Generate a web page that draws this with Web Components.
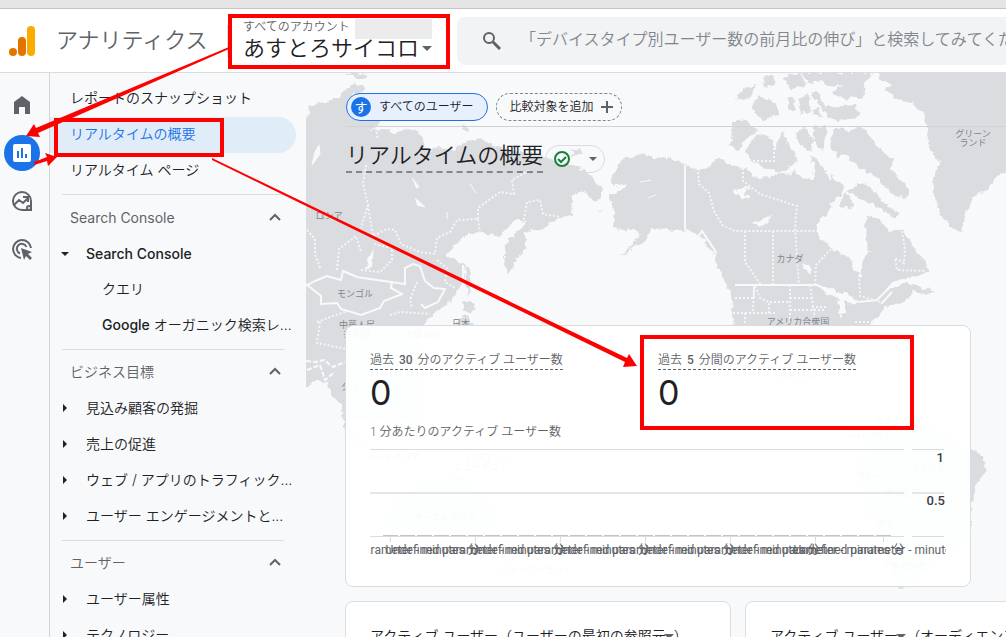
<!DOCTYPE html>
<html lang="ja">
<head>
<meta charset="utf-8">
<meta name="viewport" content="width=device-width, initial-scale=1">
<title>アナリティクス | リアルタイムの概要</title>
<style>
html,body{margin:0;height:100%}
body{overflow:hidden;background:#f8f9fb;color:#202124;font-family:Inter,"Noto Sans CJK JP",sans-serif;font-size:14px}
</style>
</head>
<body>
<ga-app></ga-app>
<script>
const define = (name, html, setup) => customElements.define(name, class extends HTMLElement {
  constructor() {
    super();
    const t = document.createElement('template');
    t.innerHTML = html;
    this.attachShadow({mode: 'open'}).append(t.content.cloneNode(true));
  }
  connectedCallback() { if (setup) setup(this, this.shadowRoot); }
});

define('ga-header', `
<style>
:host{display:block;background:#fff;border-bottom:1px solid #dadce0}
.strip{height:8px;background:#e5e5e5;border-bottom:1px solid #c4c4c4}
header{height:63px;display:flex;align-items:center}
.logo{width:28px;height:32px;margin-left:8px;flex:none}
.brand{width:172px;margin-left:20px;font-size:22px;line-height:30px;padding-bottom:2px;color:#5f6368;white-space:nowrap;box-sizing:border-box;border-right:1px solid #dadce0;flex:none;font-weight:350}
.acct{margin-left:15px;width:214px;flex:none;border:0;padding:0 0 2px;background:none;text-align:left;font:inherit;color:inherit;display:flex;flex-direction:column}
.top{display:flex;font-size:12px;line-height:16px;color:#5f6368;height:16px;font-weight:350}
.mask{width:77px;height:20px;background:#ececec;margin-left:5px}
.name{font-size:22px;line-height:26px;display:flex;align-items:center;gap:2px;font-weight:350}
.search{flex:1;min-width:0;height:48px;background:#f1f3f4;border-radius:8px 0 0 8px;display:flex;align-items:center;overflow:hidden}
.search svg{margin-left:22px;flex:none}
input{flex:1;min-width:0;margin-left:17px;border:0;padding:0 0 4px;background:none;font:350 16px/24px Inter,"Noto Sans CJK JP",sans-serif;outline:0}
input::placeholder{color:#80868b;opacity:1}
</style>
<div class="strip"></div>
<header>
<svg class="logo" viewBox="0 0 28 32"><rect x="19" y="1" width="8" height="30" rx="4" fill="#f9ab00"/><rect x="10" y="12" width="8" height="19" rx="4" fill="#e37400"/><circle cx="5" cy="27" r="4" fill="#e37400"/></svg>
<div class="brand">アナリティクス</div>
<button class="acct"><span class="top">すべてのアカウント<span class="mask"></span></span><span class="name">あすとろサイコロ<svg width="12" height="8" viewBox="0 0 12 8"><path d="M1 2h10L6 7z" fill="#5f6368"/></svg></span></button>
<div class="search"><svg width="24" height="24" viewBox="0 0 24 24"><circle cx="10" cy="9" r="5" fill="none" stroke="#5f6368" stroke-width="2"/><path d="M14 13l7 7" stroke="#5f6368" stroke-width="3"/></svg><input aria-label="検索" placeholder="「デバイスタイプ別ユーザー数の前月比の伸び」と検索してみてください"></div>
</header>`);

define('ga-rail', `
<style>
:host{display:block;width:49px;flex:none;border-right:1px solid #d2d4d8}
nav{display:flex;flex-direction:column;align-items:center;gap:12px;padding:14px 5px 0 0}
a{width:36px;height:36px;border-radius:50%;display:grid;place-items:center;color:#5f6368}
a.on{background:#1a73e8;color:#fff}
</style>
<nav aria-label="メイン">
<a href="#home" aria-label="ホーム"><svg width="24" height="24" viewBox="0 0 24 24"><path d="M4 21V9l8-6 8 6v12h-5v-7H9v7z" fill="currentColor"/></svg></a>
<a href="#reports" class="on" aria-label="レポート"><svg width="24" height="24" viewBox="0 0 24 24"><rect x="3" y="3" width="18" height="18" rx="2" fill="#fff"/><path d="M8 10v7M12 7v10M16 13v4" stroke="#1a73e8" stroke-width="2"/></svg></a>
<a href="#explore" aria-label="探索"><svg width="24" height="24" viewBox="0 0 24 24"><path d="M12 3a9 9 0 1 0 0 18h9v-9a9 9 0 0 0-9-9z" fill="none" stroke="currentColor" stroke-width="2"/><path d="M4 16l5-5 4 3 5-5M13 8h5v5" fill="none" stroke="currentColor" stroke-width="2"/><circle cx="19" cy="19" r="3" fill="currentColor"/><circle cx="19" cy="19" r="1" fill="#f8f9fb"/></svg></a>
<a href="#ads" aria-label="広告"><svg width="24" height="24" viewBox="0 0 24 24"><path d="M11 21a9 9 0 1 1 10-10M10 16.500a5 5 0 1 1 6.500-6.500" fill="none" stroke="currentColor" stroke-width="2"/><path d="M11 11l11 4-4 2 4 4-2 2-4-4-2 4z" fill="currentColor"/></svg></a>
</nav>`);

define('ga-item', `
<style>
:host{display:block}
a{display:flex;align-items:center;height:36px;box-sizing:border-box;color:#202124;text-decoration:none;font-size:14px;line-height:20px;white-space:nowrap;padding:0 0 2px 20px;font-weight:350}
:host([level="1"]) a{padding-left:12px}
:host([level="2"]) a{padding-left:52px}
:host([latin]) a{font-weight:500;padding-bottom:0}
:host([on]) a{background:#e1ecf9;color:#1a73e8;border-radius:0 18px 18px 0;margin-right:10px}
svg{display:none;flex:none;margin-right:18px}
:host([level="1"]) svg{display:block}
:host([open]) svg{transform:rotate(90deg)}
</style>
<a href="#report"><svg width="6" height="8" viewBox="0 0 6 8"><path d="M1 0l4 4-4 4z" fill="#202124"/></svg><slot></slot></a>`);

define('ga-section', `
<style>
:host{display:block}
hr{border:0;border-top:1px solid #dadce0;margin:5px 22px 5px 12px}
button{width:100%;height:36px;border:0;background:none;padding:0 24px 2px 20px;display:flex;align-items:center;justify-content:space-between;font:inherit;font-size:14px;line-height:20px;color:#5f6368;font-weight:350}
:host([latin]) button{font-weight:400;padding-bottom:0}
</style>
<hr><button aria-expanded="true"><span></span><svg width="14" height="10" viewBox="0 0 14 10"><path d="M2 7l5-5 5 5" fill="none" stroke="#5f6368" stroke-width="2"/></svg></button><slot></slot>`,
(el, root) => root.querySelector('span').textContent = el.getAttribute('heading'));

define('ga-sidebar', `
<style>:host{display:block;width:256px;flex:none;padding-top:8px;box-sizing:border-box}</style>
<nav aria-label="レポート">
<ga-item>レポートのスナップショット</ga-item>
<ga-item on>リアルタイムの概要</ga-item>
<ga-item>リアルタイム ページ</ga-item>
<ga-section heading="Search Console" latin>
<ga-item level="1" open latin>Search Console</ga-item>
<ga-item level="2">クエリ</ga-item>
<ga-item level="2"><span style="font-weight:500">Google</span>&nbsp;オーガニック検索レ...</ga-item>
</ga-section>
<ga-section heading="ビジネス目標">
<ga-item level="1">見込み顧客の発掘</ga-item>
<ga-item level="1">売上の促進</ga-item>
<ga-item level="1">ウェブ / アプリのトラフィック...</ga-item>
<ga-item level="1">ユーザー エンゲージメントと...</ga-item>
</ga-section>
<ga-section heading="ユーザー">
<ga-item level="1">ユーザー属性</ga-item>
<ga-item level="1">テクノロジー</ga-item>
</ga-section>
</nav>`);

define('ga-map', `
<style>
:host{display:block;position:absolute;inset:0;overflow:hidden}
svg{display:block}
.land{fill:#dadce0}
.w{fill:#f8f9fb}
.b{fill:none;stroke:#f8f9fb;stroke-width:2}
.d{fill:none;stroke:#f5f6f8;stroke-width:2;stroke-dasharray:2 2}
text{font:9px Roboto,"Noto Sans CJK JP",sans-serif;fill:#80868b;text-anchor:middle}
</style>
<svg width="700" height="564" viewBox="306 73 700 564" aria-hidden="true">
<defs><filter id="coast" x="0" y="0" width="100%" height="100%"><feTurbulence type="fractalNoise" baseFrequency=".16" numOctaves="3" seed="4"/><feDisplacementMap in="SourceGraphic" scale="7" xChannelSelector="R" yChannelSelector="G"/></filter></defs>
<g filter="url(#coast)">
<g class="land">
<path d="M296 120L308 115 309 107 320 103 330 101 346 90 354 84 363 85 364 91 352 95 350 101 358 105 373 102 379 107 372 114 381 119 377 128 367 130 385 129 395 133 409 128 420 132 423 143 428 152 440 147 455 150 466 141 480 139 496 147 520 152 542 156 560 164 577 166 590 175 604 190 600 198 595 203 586 192 577 192 572 200 571 215 553 220 543 229 533 230 525 232 526 247 518 258 509 275 505 262 505 246 515 233 528 222 516 220 505 230 500 236 483 233 466 234 456 244 447 257 455 260 464 264 464 280 457 292 447 305 437 310 426 322 420 330H420V420H346L341 405 334 399 327 384 317 379 308 387H296z"/>
<path d="M465 265L470 267 472 284 468 297 466 280z"/><path d="M465 301L476 307 471 314 462 310zM458 319L468 316 474 327H455z"/>
<path d="M345 73L357 73 368 76 357 79zM462 125L468 127 469 132 462 130zM571 151L580 149 582 154 573 156zM598 209L604 211 600 213z"/>
<path d="M610 183L613 173 622 160 635 157 642 152 652 157 666 158 684 163 698 171 708 168 716 160 722 160 733 165 748 170 757 178 772 177 778 172 790 175 795 170 800 178 812 180 815 168 809 155 821 163 830 182 832 174 837 183 845 186 839 196 832 203 826 215 817 224 817 234 832 249 850 258 853 270 861 276 863 260 868 250 866 235 864 222 869 216 880 220 889 231 902 229 910 241 916 252 926 262 927 272 916 277 897 280 886 291 906 283 917 285 935 292 926 294 914 292 901 304 888 305 880 315 870 325V345H735L732 296 726 284 717 266 711 251 700 236 688 231 665 229 652 228 644 242 631 249 618 259 630 247 641 234 634 229 620 231 613 228 615 212 608 196 620 191 628 185 614 186z"/>
<path d="M730 146L733 122 745 120 758 130 744 140 738 152z"/>
<path d="M745 152L757 134 771 138 775 151 782 132 790 148 798 160 786 171 767 170 752 160z"/>
<path d="M794 135L804 126 813 139 811 152 801 146zM814 127L828 126 825 139 822 151 814 140z"/>
<path d="M830 146L833 130 842 127 848 133 856 127 866 129 870 139 881 149 893 160 890 168 901 181 910 190 907 199 893 195 879 180 864 170 850 160 845 153 838 158z"/>
<path d="M736 98L744 88 755 86 751 97 744 101zM752 110L758 96 768 99 778 106 779 115 762 120zM788 100L793 96 795 109 789 111zM798 98L808 94 810 112 802 114zM811 94L818 91 826 107 856 105 860 117 839 121 829 117zM762 79L772 75 776 83 766 87zM782 77L800 73 806 84 791 90zM800 73H874L864 84 865 97 846 99 831 92 843 84 828 86 821 80 812 84zM812 110L819 108 821 118 814 115z"/>
<path d="M875 65H1020V167L997 176 987 190 975 196 966 212 962 231 951 228 941 216 934 195 933 178 940 163 930 151 928 129 923 112 911 103 896 99 885 89 892 84 881 80z"/>
<path d="M842 196L846 192 854 204 850 209 840 207zM848 193L858 184 868 185 883 202 899 213 898 219 886 212 873 204 866 202z"/>
<path d="M965 445L978 453 986 461 984 474 976 484 974 500 966 508zM875 424L940 430 970 455 970 535 900 590 870 520 855 470zM395 500L430 480 465 476 495 510 490 535 440 533 385 528zM340 407L350 424 365 442 374 452 361 448 347 435z"/>
</g>
<g class="w"><path d="M731 191L742 188 751 187 743 193 750 197 742 199zM752 222L761 221 774 213 767 223 760 226zM820 290L828 286 836 293 846 293 857 301 851 305 846 300 846 312 840 316 838 298 828 294zM804 263L810 267 811 275 805 270zM932 161L940 159 938 168zM363 270L370 257 373 247 374 258 368 270z"/></g>
</g>
<g class="b"><path d="M306 286L315 281 327 276 341 280 343 271 357 277 370 279 391 282 405 284 405 268 413 264 420 266 425 281 434 288 445 289 438 302 425 308 421 304M306 284L321 296 321 304 337 303 341 309 361 315 380 308 384 301 402 294 391 288 392 281"/>
<path d="M306 361L316 362 324 360 333 367 345 362M307 370L320 365 325 380 335 372" stroke-dasharray="5 2"/>
<path d="M685 166V229L692 233 697 238 702 231 716 252 713 261M735 285H817L826 289M858 302L877 300 886 291M881 304L892 292M463 265V294L466 296M886 291L893 283 916 279"/></g>
<path d="M312 165L315 152 319 145 320 154zM412 178L419 187 416 188M415 198L425 207 417 205M447 212V219M470 184L476 193M640 182L651 180M648 198L656 195" fill="#f8f9fb" stroke="#f8f9fb"/>
<g class="d"><path d="M376 128L378 140M366 165L363 183 368 205 361 228M368 205L373 236 387 229 395 230 401 244 420 252 435 254 437 238 450 232 457 220 478 219 480 233M478 219L478 208 500 192 514 194 512 180 530 170M524 220L527 202 540 200 543 214 560 217M307 230L315 239 315 254 321 270M337 270L339 249 356 236 361 252M361 270L380 272 392 260 392 248 374 244M437 260L447 268 445 282 455 288M417 282L410 300 412 308M317 322L330 317 345 312M320 322L317 343 346 349M390 315L400 312 430 314"/><path d="M698 172L699 184 709 193 714 211 722 225 735 231H817M743 168L743 181 760 194 797 206 795 228 799 285M745 231V262L761 285M773 231V285M831 249L816 265 815 285M859 275L860 296 880 302M902 231L905 250 904 263 895 258 897 270 926 271M735 298H754V285L753 313M755 286L760 298 769 302V315M790 285V325M770 302H790M790 298H812M790 310H825M810 285L815 320M733 313H775M812 307H826M774 132V161H752M745 313V325M855 322H873"/></g>
<g><text x="329" y="219">ロシア</text><text x="355" y="297">モンゴル</text><text x="357" y="328">中華人民</text><text x="357" y="337">共和国</text><text x="461" y="327">日本</text><text x="423" y="337">大韓民国</text><text x="350" y="390">タイ</text><text x="790" y="262">カナダ</text><text x="798" y="325">アメリカ合衆国</text><text x="973" y="137">グリーン</text><text x="973" y="146">ランド</text><text x="795" y="378">メキシコ</text><text x="393" y="460">インドネシア</text><text x="480" y="461">パプア</text><text x="481" y="470">ニューギニア</text><text x="445" y="521">オーストラリア</text><text x="536" y="573">ニュージーランド</text><text x="897" y="425">ベネズエラ</text><text x="870" y="437">コロンビア</text><text x="928" y="472">ブラジル</text><text x="869" y="479">ペルー</text><text x="902" y="496">ボリビア</text><text x="886" y="527">チリ</text><text x="909" y="569">アルゼンチン</text></g>
</svg>`);

define('ga-card', `
<style>:host{display:block;box-sizing:border-box;background:rgba(255,255,255,.95);border:1px solid #dadce0;border-radius:8px;padding:24px}</style><slot></slot>`);

define('ga-metric', `
<style>
:host{display:block}
.l{display:inline-block;font:350 12px/18px Roboto,"Noto Sans CJK JP",sans-serif;color:#5f6368;border-bottom:1px dashed #5f6368;white-space:nowrap}
::slotted(b){font-weight:500;margin:0 2px}
.v{font-size:34px;line-height:46px;color:#202124}
</style>
<div><span class="l"><slot></slot></span></div><div class="v"></div>`,
(el, root) => root.querySelector('.v').textContent = el.getAttribute('value'));

define('ga-chart', `
<style>
:host{display:block}
svg{display:block;width:100%}
.g{stroke:#dadce0}
.x{font:12px Roboto,"Noto Sans CJK JP",sans-serif;fill:#5f6368;text-anchor:middle}
.y{font:500 13px Roboto,sans-serif;fill:#3c4043;text-anchor:end}
</style>
<svg viewBox="0 0 576 116" role="img" aria-label="1 分あたりのアクティブ ユーザー数">
<path class="g" fill="none" d="M0 4.500H534M542 4.500H574M0 91.500H534M542 91.500H574"/>
<path class="g" fill="none" stroke-width="2" opacity=".7" d="M0 48H534M542 48H574"/>
<path d="M13 90.500H522" stroke="#c4c2cf" stroke-dasharray="15 2"/>
<g id="t"></g>
<text class="y" x="574" y="17">1</text><text class="y" x="575" y="60">0.5</text>
</svg>`, (el, root) => {
  root.querySelector('#t').innerHTML = [20, 105, 190, 275, 360, 445, 513].map(x =>
    `<path class="g" d="M${x}.5 92v5"/><text class="x" x="${x}" y="109">Undefined parameter - minutes 分</text>`).join('');
});

define('ga-main', `
<style>
:host{display:block;flex:1;min-width:0;position:relative;overflow:hidden}
main{position:relative;padding-left:39px}
.chips{display:flex;align-items:center;gap:8px;height:53px;border-bottom:1px solid #d0d2d6;margin-left:1px}
.chips button{height:28px;border-radius:14px;display:flex;align-items:center;font:350 12px/16px Inter,"Noto Sans CJK JP",sans-serif;color:#202124;box-sizing:border-box;white-space:nowrap;margin-top:15px}
.all{border:1px solid #1a73e8;background:#e8f0fe;padding:0 12px 0 4px;gap:8px}
.chips .all{padding-right:14px}
.all b{width:20px;height:20px;line-height:20px;border-radius:50%;background:#1a73e8;color:#fff;font-weight:400;text-align:center;font-size:13px}
.add{border:1px dashed #80868b;background:#f8f9fb;padding:0 7px 0 12px;gap:7px}
.title{display:flex;align-items:center;gap:2px;height:64px;margin-left:1px}
h1{margin:0 0 6px;font-weight:350;font-size:22px;line-height:32px;border-bottom:2px dashed #80868b;color:#202124}
.status{width:60px;height:28px;border:1px solid #dadce0;border-radius:14px;background:none;padding:0 0 0 6px;display:flex;align-items:center;gap:16px}
.big{margin:134px 35px 0 0;height:262px}
.pair{display:grid;grid-template-columns:1fr 1fr}
.per{font:350 12px/20px Roboto,"Noto Sans CJK JP",sans-serif;color:#5f6368;margin:6px 0 3px}
.low{display:grid;grid-template-columns:386px 386px;gap:14px;margin-top:14px}
.low ga-card{height:300px;padding-right:0}
h2{margin:0;font-weight:350;font-size:14px;line-height:20px;white-space:nowrap}
h2 svg{margin:0 0 1px -2px}
</style>
<ga-map></ga-map>
<main>
<div class="chips"><button class="all"><b>す</b>すべてのユーザー</button><button class="add">比較対象を追加<svg width="14" height="14" viewBox="0 0 14 14"><path d="M7 1v12M1 7h12" stroke="#5f6368" stroke-width="2"/></svg></button></div>
<div class="title"><h1>リアルタイムの概要</h1><button class="status" aria-label="データの状態"><svg width="20" height="20" viewBox="0 0 20 20"><circle cx="10" cy="10" r="7" fill="none" stroke="#188038" stroke-width="2"/><path d="M6 10l3 3 5-5" fill="none" stroke="#188038" stroke-width="2"/></svg><svg width="10" height="6" viewBox="0 0 10 6"><path d="M1 1h8L5 5z" fill="#5f6368"/></svg></button></div>
<ga-card class="big">
<div class="pair"><ga-metric value="0">過去 <b>30</b> 分のアクティブ ユーザー数</ga-metric><ga-metric value="0">過去 <b>5</b> 分間のアクティブ ユーザー数</ga-metric></div>
<div class="per">1 分あたりのアクティブ ユーザー数</div>
<ga-chart></ga-chart>
</ga-card>
<div class="low"><ga-card><h2>アクティブ ユーザー（ユーザーの最初の参照元<svg width="10" height="6" viewBox="0 0 10 6"><path d="M0 0h10L5 5z" fill="#5f6368"/></svg>）</h2></ga-card><ga-card><h2>アクティブ ユーザー<svg width="10" height="6" viewBox="0 0 10 6"><path d="M0 0h10L5 5z" fill="#5f6368"/></svg>（オーディエンス）</h2></ga-card></div>
</main>`);

define('ga-annotations', `
<style>:host{display:block;position:absolute;left:0;top:0;pointer-events:none}svg{display:block}</style>
<svg width="1006" height="637" viewBox="0 0 1006 637" aria-hidden="true">
<g fill="none" stroke="#f00" stroke-width="4"><path d="M230 16H448V67H230zM56 120H222V155H56zM642 337H912V428H642z"/></g>
<g fill="#f00"><path d="M229 47L36 128 34 124 26 136 40 137 38 133 229 49z"/><path d="M34 162L47 157 45 153 57 157 48 166 47 161 34 165z"/><path d="M212 158L627 358 629 354 637 366 623 367 625 362 212 160z"/></g>
</svg>`);

define('ga-app', `
<style>
:host{display:flex;flex-direction:column;height:100vh;overflow:hidden;position:relative}
.body{flex:1;min-height:0;display:flex}
</style>
<ga-header></ga-header>
<div class="body"><ga-rail></ga-rail><ga-sidebar></ga-sidebar><ga-main></ga-main></div>
<ga-annotations></ga-annotations>`);
</script>
</body>
</html>
